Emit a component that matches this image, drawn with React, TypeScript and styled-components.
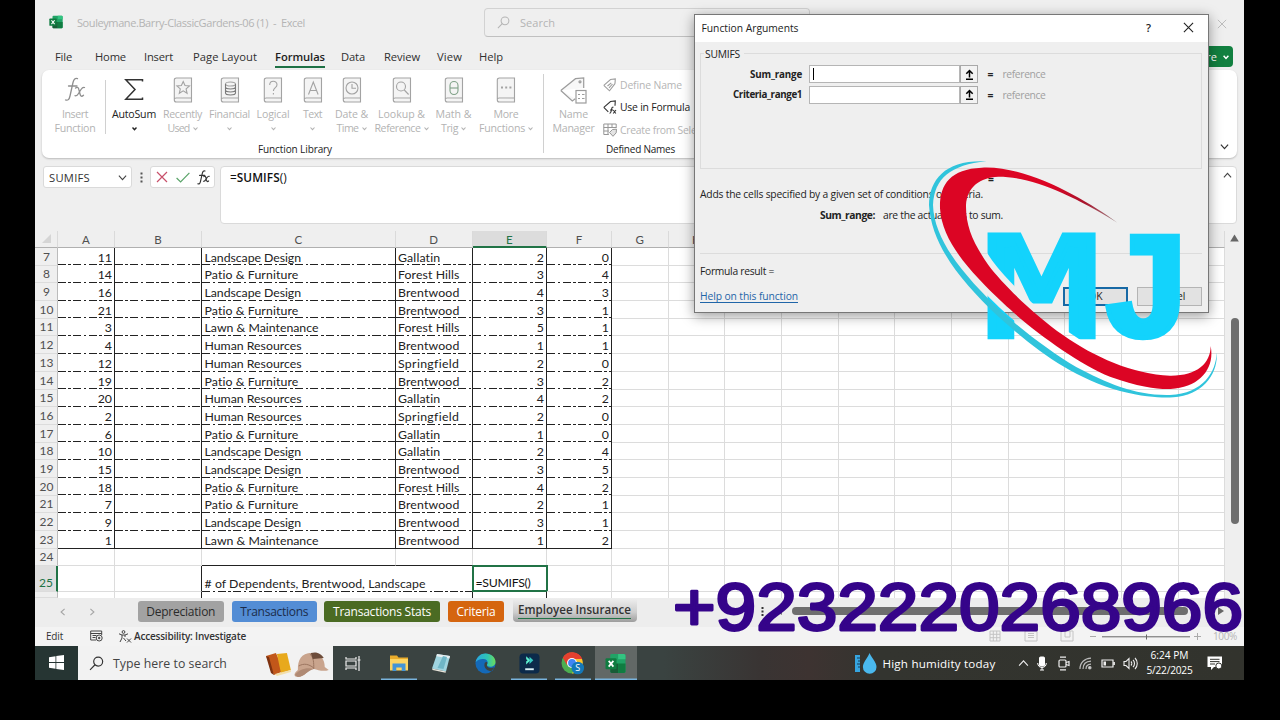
import React, { useLayoutEffect, useRef } from 'react';
import styled, { createGlobalStyle, css } from 'styled-components';

const ui = '"Open Sans", "Noto Sans", sans-serif';
const sheetFont = 'Lato, "Open Sans", sans-serif';

const Global = createGlobalStyle`
  * { box-sizing: border-box; }
  body { margin: 0; background: #000; overflow: hidden; }
`;

/* Text whose tracking is adjusted so that it spans a given width. */
const Run = styled.span`
  display: inline-block;
  white-space: pre;
`;

function Fit({ w, children }: { w: number; children: string }) {
  const ref = useRef<HTMLSpanElement>(null);
  useLayoutEffect(() => {
    const el = ref.current;
    if (!el) return;
    el.style.letterSpacing = '0px';
    const natural = el.getBoundingClientRect().width;
    el.style.letterSpacing = `${(w - natural) / children.length}px`;
  }, [w, children]);
  return <Run ref={ref}>{children}</Run>;
}

const Screen = styled.div`
  width: 1280px;
  height: 720px;
  background: #000;
  padding-left: 35px;
  position: relative;
  overflow: hidden;
  font-family: ${ui};
`;

const Win = styled.div`
  width: 1209px;
  height: 680px;
  background: #efefef;
  display: flex;
  flex-direction: column;
  overflow: hidden;
`;

/* ---------- title bar ---------- */
const TitleBar = styled.div`
  height: 43px;
  flex: none;
  display: flex;
  align-items: center;
  padding-left: 14px;
  color: #b4b4b4;
  font-size: 11px;
`;
const AppTitle = styled.div`
  width: 407px;
  margin-left: 14px;
  padding-top: 2px;
`;
const SearchBox = styled.div`
  width: 326px;
  height: 29px;
  margin-top: 2px;
  border: 1px solid #d2d2d2;
  border-bottom-color: #c0c0c0;
  border-radius: 4px;
  display: flex;
  align-items: center;
  gap: 10px;
  padding-left: 12px;
`;
const CloseWin = styled.div`
  margin: 4px 0 0 407px;
  height: 10px;
  display: flex;
`;

/* ---------- ribbon ---------- */
const Tabs = styled.div`
  height: 27px;
  flex: none;
  display: flex;
  padding: 5px 0 0 20px;
  font-size: 11.2px;
  line-height: 18px;
  color: #303030;
`;
const Tab = styled.div<{ $slot: number; $on?: boolean }>`
  width: ${(p) => p.$slot}px;
  ${(p) => p.$on && css`
    color: #1d1d1d;
    font-weight: 600;
    span { border-bottom: 2px solid #1e7145; height: 19.5px; }
  `}
`;
const Share = styled.div`
  margin-left: 644px;
  width: 60px;
  height: 21px;
  margin-top: -2px;
  border-radius: 4px;
  background: #128040;
  color: #fff;
  font-size: 11px;
  line-height: 20px;
  display: flex;
  align-items: center;
  justify-content: flex-end;
  gap: 6px;
  padding-right: 4px;
`;
const Ribbon = styled.div`
  height: 88px;
  flex: none;
  margin: 0 7px;
  background: #fff;
  border-radius: 7px;
  box-shadow: 0 1px 2px rgba(0, 0, 0, 0.22);
  display: flex;
  padding-left: 3px;
`;
const Group = styled.div<{ $w: number }>`
  width: ${(p) => p.$w}px;
  height: 88px;
  display: flex;
  flex-direction: column;
`;
const GroupBody = styled.div`
  display: flex;
  height: 71px;
`;
const GroupName = styled.div`
  text-align: center;
  padding-left: 2px;
  font-size: 10px;
  line-height: 17px;
  color: #222;
`;
const Tool = styled.div<{ $w: number; $on?: boolean }>`
  width: ${(p) => p.$w}px;
  flex: none;
  display: flex;
  flex-direction: column;
  align-items: center;
  padding-top: 7px;
  font-size: 10.6px;
  line-height: 14px;
  white-space: nowrap;
  color: ${(p) => (p.$on ? '#222' : '#b3b3b3')};
  svg { flex: none; }
`;
const ToolLine = styled.div`
  height: 14px;
  display: flex;
  align-items: center;
  justify-content: center;
  gap: 3px;
`;
const IconSlot = styled.div`
  height: 30px;
  display: flex;
  align-items: flex-start;
`;
const Divider = styled.div<{ $h: number; $top: number }>`
  width: 1px;
  flex: none;
  height: ${(p) => p.$h}px;
  margin-top: ${(p) => p.$top}px;
  background: #d0d0d0;
`;
const NameList = styled.div`
  display: flex;
  flex-direction: column;
  padding: 4px 0 0 0;
  font-size: 10.4px;
`;
const NameItem = styled.div<{ $on?: boolean }>`
  height: 23px;
  display: flex;
  align-items: center;
  gap: 3px;
  white-space: nowrap;
  color: ${(p) => (p.$on ? '#222' : '#b5b5b5')};
`;
const RibbonMore = styled.div`
  margin: 72px 0 0 485px;
  height: 8px;
  display: flex;
`;

/* ---------- formula bar ---------- */
const FormulaBar = styled.div`
  height: 73px;
  flex: none;
  display: flex;
  align-items: flex-start;
  padding: 8px 0 0 8px;
  font-size: 11.2px;
  color: #333;
`;
const Field = styled.div<{ $w: number; $ml?: number }>`
  width: ${(p) => p.$w}px;
  height: 22px;
  margin-left: ${(p) => p.$ml ?? 0}px;
  background: #fff;
  border: 1px solid #dadada;
  border-radius: 3px;
  display: flex;
  align-items: center;
  justify-content: space-between;
  padding: 0 4px 0 5px;
`;
const Dots = styled.div`
  width: 19px;
  height: 22px;
  display: flex;
  align-items: center;
  justify-content: center;
`;
const FormulaInput = styled.div`
  width: 1017px;
  height: 58px;
  margin-left: 5px;
  background: #fff;
  border: 1px solid #dadada;
  border-radius: 4px;
  display: flex;
  justify-content: space-between;
  padding: 2px 4px 0 9px;
  font-size: 11.8px;
  line-height: 17px;
  color: #111;
  b { font-weight: 600; }
  svg { margin-top: 2px; }
`;

/* ---------- sheet ---------- */
const SheetArea = styled.div`
  height: 366.5px;
  flex: none;
  display: flex;
  overflow: hidden;
`;
const tracks = '23px 57px 87px 193.5px 77px 74.5px 65px 56.5px repeat(9, 56.7px) 46px';
const Sheet = styled.div`
  width: 1190px;
  overflow: hidden;
  display: grid;
  grid-template-columns: ${tracks};
  grid-template-rows: 17px repeat(18, 17.7px) 26px 6px;
  font-family: ${sheetFont};
  font-size: 12.3px;
  color: #222;
  background: #fff;
`;
const ColHead = styled.div<{ $on?: boolean }>`
  background: ${(p) => (p.$on ? '#dcdcdc' : '#efefef')};
  border-right: 1px solid #dadada;
  border-bottom: ${(p) => (p.$on ? '2px solid #217346' : '1px solid #b0b0b0')};
  color: ${(p) => (p.$on ? '#217346' : '#505050')};
  text-align: center;
  line-height: 18px;
  font-size: 11.5px;
`;
const RowHead = styled.div<{ $on?: boolean }>`
  background: ${(p) => (p.$on ? '#dfdfdf' : '#efefef')};
  border-right: ${(p) => (p.$on ? '2px solid #217346' : '1px solid #bbb')};
  border-bottom: 1px solid #dcdcdc;
  color: ${(p) => (p.$on ? '#217346' : '#505050')};
  display: flex;
  align-items: flex-end;
  justify-content: center;
  line-height: 16px;
  font-size: 12px;
  padding-left: 1px;
`;
type Line = 'grid' | 'dash' | 'solid' | 'none';
const Cell = styled.div<{ $right?: boolean; $side: Line; $under: Line; $span?: number }>`
  ${(p) => p.$span && `grid-column: span ${p.$span};`}
  display: flex;
  align-items: flex-end;
  justify-content: ${(p) => (p.$right ? 'flex-end' : 'flex-start')};
  padding: 0 2px 0 2.5px;
  line-height: ${(p) => (p.$under === 'dash' ? 17 : 15)}px;
  white-space: nowrap;
  border-right: 1px solid ${(p) => (p.$side === 'solid' ? '#222' : p.$side === 'none' ? 'transparent' : '#dcdcdc')};
  ${(p) => p.$under === 'grid' && 'border-bottom: 1px solid #dcdcdc;'}
  ${(p) => p.$under === 'solid' && 'border-bottom: 1px solid #222;'}
  ${(p) => p.$under === 'dash' && css`
    background: repeating-linear-gradient(90deg, #222 0 8px, transparent 8px 10.5px, #222 10.5px 13px, transparent 13px 15.5px)
      0 100% / 100% 1.3px no-repeat;
  `}
`;
const EditCell = styled(Cell)`
  border: 2px solid #217346;
  margin: -1px -1px 0 -1px;
  padding-left: 2px;
  color: #111;
  line-height: 14px;
`;
const ScrollV = styled.div`
  width: 19px;
  display: flex;
  flex-direction: column;
  align-items: center;
  padding-top: 3px;
  gap: 76px;
`;
const ThumbV = styled.div`
  width: 8px;
  height: 206px;
  border-radius: 4px;
  background: #6e6e6e;
`;

/* ---------- sheet tabs ---------- */
const TabStrip = styled.div`
  height: 29px;
  flex: none;
  display: flex;
  align-items: flex-start;
  background: #ededed;
  padding-top: 3.5px;
`;
const Arrows = styled.div`
  width: 103px;
  height: 21px;
  padding-left: 24px;
  display: flex;
  align-items: center;
  gap: 21px;
`;
const SheetTab = styled.div<{ $w: number; $bg: string; $fg: string; $gap: number }>`
  width: ${(p) => p.$w}px;
  height: 21px;
  margin-right: ${(p) => p.$gap}px;
  border-radius: 3px;
  background: ${(p) => p.$bg};
  color: ${(p) => p.$fg};
  display: flex;
  align-items: center;
  justify-content: center;
  font-size: 12px;
`;
const CurrentTab = styled.div`
  width: 124px;
  height: 24px;
  margin-top: -3.5px;
  border-radius: 0 0 4px 4px;
  background: linear-gradient(#efefef, #cdcdcd 60%, #9d9d9d);
  display: flex;
  justify-content: center;
  color: #333;
  font-size: 11.6px;
  font-weight: 600;
  line-height: 23px;
  span { height: 21.5px; border-bottom: 1.5px solid #217346; }
`;
const ScrollH = styled.div`
  display: flex;
  align-items: center;
  height: 20px;
  margin-left: 124px;
  gap: 10px;
`;
const ThumbH = styled.div`
  width: 396px;
  height: 8px;
  border-radius: 4px;
  background: #6e6e6e;
`;

/* ---------- status bar ---------- */
const Status = styled.div`
  height: 19px;
  flex: none;
  background: #f3f3f3;
  display: flex;
  align-items: center;
  padding-left: 11px;
  font-size: 10px;
  color: #333;
`;
const StatusText = styled.div<{ $w: number; $bold?: boolean }>`
  width: ${(p) => p.$w}px;
  font-weight: ${(p) => (p.$bold ? 600 : 400)};
`;
const ViewTools = styled.div`
  margin-left: auto;
  padding-right: 7px;
  display: flex;
  align-items: center;
  gap: 4px;
  color: #b5b5b5;
`;

/* ---------- taskbar ---------- */
const Taskbar = styled.div`
  flex: 1;
  display: flex;
  background: linear-gradient(90deg, #3a4341 0, #3a4341 52%, #393433 60%, #3d3331 64%, #33342f 70%, #32332d 100%);
`;
const Start = styled.div`
  width: 43px;
  background: #263533;
  display: flex;
  align-items: center;
  justify-content: center;
`;
const TaskSearch = styled.div`
  width: 255px;
  background: #f2f2f2;
  display: flex;
  align-items: center;
  padding: 2px 4px 0 11px;
  color: #444;
  font-size: 12.3px;
`;
const SearchLabel = styled.div`
  width: 153px;
  margin-left: 9px;
`;
const TaskItem = styled.div<{ $w: number; $line?: boolean; $on?: boolean }>`
  width: ${(p) => p.$w}px;
  padding-top: 1px;
  display: flex;
  align-items: center;
  justify-content: center;
  ${(p) => p.$line && 'box-shadow: inset 0 -1.5px #79b4dd;'}
  ${(p) => p.$on && 'background: #626866;'}
`;
const Weather = styled.div`
  display: flex;
  align-items: center;
  gap: 6px;
  margin-left: 217px;
  padding-top: 1px;
  color: #fff;
  font-size: 11.6px;
`;
const Tray = styled.div`
  display: flex;
  align-items: center;
  gap: 8.8px;
  margin-left: 22px;
  padding-top: 1px;
`;
const Clock = styled.div`
  width: 50px;
  margin-left: 6px;
  padding-top: 1px;
  color: #fff;
  font-size: 10.2px;
  line-height: 15.5px;
  text-align: center;
  align-self: center;
`;
const Notice = styled.div`
  margin-left: 13px;
  padding-top: 1px;
  display: flex;
  align-items: center;
`;

/* ---------- dialog ---------- */
const Dialog = styled.div`
  position: absolute;
  left: 694px;
  top: 14px;
  width: 515px;
  height: 299px;
  border: 1px solid #777;
  background: #efefef;
  box-shadow: 0 3px 12px rgba(0, 0, 0, 0.4);
  font-size: 10.3px;
  color: #222;
`;
const DialogTitle = styled.div`
  height: 27px;
  background: #fff;
  display: flex;
  align-items: center;
  padding: 0 14px 2px 6.5px;
`;
const TitleButtons = styled.div`
  margin-left: auto;
  display: flex;
  align-items: center;
  gap: 32px;
  font-size: 11px;
  font-weight: 600;
`;
const Arguments = styled.div`
  width: 502px;
  height: 116px;
  margin: 11px 0 0 5px;
  border: 1px solid #dcdcdc;
`;
const Legend = styled.div`
  width: 40px;
  height: 12px;
  margin: -7px 0 0 3px;
  padding-left: 1px;
  background: #efefef;
  line-height: 14px;
`;
const ArgRow = styled.div`
  height: 18px;
  margin-bottom: 2.6px;
  display: flex;
  align-items: center;
  &:nth-child(2) { margin-top: 6px; }
`;
const ArgName = styled.div`
  width: 101px;
  margin-right: 7px;
  text-align: right;
  font-weight: 700;
  font-size: 9.8px;
`;
const ArgInput = styled.div`
  width: 151px;
  height: 18px;
  border: 1px solid #b5b5b5;
  background: #fff;
  display: flex;
  align-items: center;
  padding-left: 3px;
`;
const Caret = styled.div`
  width: 1px;
  height: 12px;
  background: #000;
`;
const PickButton = styled.div`
  width: 18px;
  height: 18px;
  border: 1.5px solid #a9a9a9;
  background: #f3f3f3;
  display: flex;
  align-items: center;
  justify-content: center;
`;
const Equals = styled.div`
  width: 24.5px;
  padding-left: 9.5px;
  font-weight: 700;
`;
const Muted = styled.div`
  color: #a0a0a0;
`;
const Result = styled.div`
  height: 12px;
  line-height: 12px;
  margin: 4px 0 0 293px;
  font-weight: 700;
`;
const Para = styled.div`
  height: 14px;
  line-height: 14px;
  margin: 2px 0 0 5px;
`;
const ArgHelp = styled.div`
  display: flex;
  gap: 8px;
  height: 14px;
  line-height: 14px;
  margin: 7px 0 31px 125px;
  b { font-weight: 700; }
`;
const Foot = styled.div`
  height: 58px;
  margin: 0 6px 0 5px;
  border-top: 1px solid #dcdcdc;
  padding-top: 10px;
  line-height: 14px;
`;
const FootRow = styled.div`
  display: flex;
  align-items: center;
  height: 20px;
  margin-top: 8px;
`;
const HelpLink = styled.div`
  color: #1f65a8;
  width: 363px;
  span { border-bottom: 1px solid #1f65a8; line-height: 12px; }
`;
const Button = styled.div<{ $primary?: boolean; $ml?: number }>`
  width: 65px;
  height: 19px;
  margin-left: ${(p) => p.$ml ?? 0}px;
  border: ${(p) => (p.$primary ? '2px solid #1769a5' : '1px solid #b4b4b4')};
  background: #e2e2e2;
  text-align: center;
  line-height: ${(p) => (p.$primary ? 15 : 17)}px;
`;

/* ---------- overlays ---------- */
const Mark = styled.svg`
  position: absolute;
  left: 920px;
  top: 150px;
`;
const Phone = styled.svg`
  position: absolute;
  left: 660px;
  top: 568px;
`;

/* ---------- icons ---------- */
const Chevron = ({ size = 5, color = 'currentColor', turn = 0, sw = 1.1 }: { size?: number; color?: string; turn?: number; sw?: number }) => (
  <svg width={size} height={size} viewBox="0 0 10 10" fill="none" stroke={color} strokeWidth={(sw * 10) / size}>
    <path d="M1 3l4 4.4L9 3" transform={`rotate(${turn} 5 5)`} />
  </svg>
);

const Cross = ({ size, color, sw = 1.2 }: { size: number; color: string; sw?: number }) => (
  <svg width={size} height={size} viewBox="0 0 12 12" stroke={color} strokeWidth={sw}>
    <path d="M1 1l10 10M11 1L1 11" />
  </svg>
);

const Lens = ({ size, color, sw = 1.1 }: { size: number; color: string; sw?: number }) => (
  <svg width={size} height={size} viewBox="0 0 14 14" fill="none" stroke={color} strokeWidth={sw}>
    <circle cx="8.6" cy="5.2" r="4.2" />
    <path d="M5.6 8.2L1 13" />
  </svg>
);

const ExcelIcon = ({ size }: { size: number }) => (
  <svg width={size} height={size} viewBox="0 0 20 20">
    <rect x="5" y="1" width="14.5" height="18" rx="1.4" fill="#21a366" />
    <path d="M12.5 1H18a1.5 1.5 0 011.5 1.500V6h-7z" fill="#33c481" />
    <path d="M5 10h7.500v9H6.400A1.400 1.400 0 015 17.600z" fill="#185c37" />
    <path d="M12.500 10h7v7.600a1.400 1.400 0 01-1.400 1.400h-5.600z" fill="#107c41" />
    <rect x="0.500" y="5" width="10.500" height="10.500" rx="1" fill="#107c41" />
    <path d="M3.500 7.500l4.500 5.500M8 7.500l-4.500 5.500" stroke="#fff" strokeWidth="1.600" />
  </svg>
);

const FxIcon = ({ w, h, color, sw }: { w: number; h: number; color: string; sw: number }) => (
  <svg width={w} height={h} viewBox="0 0 21 25" fill="none" stroke={color} strokeWidth={sw} strokeLinecap="round">
    <path d="M1 23c2.500.800 3.700-.500 4.500-4L8.500 5.500C9.300 2 10.800.900 13 1.700M4 9h8.500" />
    <path d="M11 11c2-1.500 3-.5 3.500 2l1 4c.6 2.500 1.700 3 3.500 1.300M20 10.500c-1.500-.5-2.500.5-3.500 2l-2.500 4c-1 1.800-2 2.700-3.500 2.200" />
  </svg>
);

const SigmaIcon = () => (
  <svg width="20" height="25" viewBox="0 0 20 25" fill="none" stroke="#333" strokeWidth="1.500">
    <path d="M18.500 4.500V2.700H1.800l9.200 9.800L1.800 22.300h16.700V20.500" />
  </svg>
);

const Book = ({ children }: { children: React.ReactNode }) => (
  <svg width="20" height="26" viewBox="0 0 20 26" fill="none" stroke="#a3a3a3" strokeWidth="1.100">
    <path d="M18.500 1H3.500A2 2 0 001.300 3v20a2 2 0 002 2h15.200zM1.300 22.500c0-1 1-1.500 2-1.500h15.200" fill="#f4f4f4" />
    {children}
  </svg>
);

const glyphs: Record<string, React.ReactNode> = {
  star: <path d="M10.200 4.500l1.800 4 4.500.4-3.400 3 1 4.400-3.900-2.400-3.900 2.400 1-4.400-3.400-3 4.500-.4z" />,
  coins: <g><ellipse cx="10.500" cy="7" rx="5" ry="2" /><path d="M5.500 7v9c0 2.600 10 2.600 10 0V7M5.500 10c0 2.600 10 2.600 10 0M5.500 13c0 2.600 10 2.600 10 0" stroke="#7b7b7b" /></g>,
  ask: <g><path d="M6.700 8c0-5 7.300-4.800 7.300-.3 0 3-3.600 2.800-3.600 6.300" /><path d="M10.400 16v1.600" /></g>,
  letter: <path d="M5.500 17.500L10.300 5l4.800 12.500M7 13.500h6.600" />,
  clock: <g><circle cx="10" cy="11" r="6" /><path d="M10 7v4.300h4" /></g>,
  lens: <g><circle cx="9" cy="9.500" r="4.500" /><path d="M12.300 13l4.300 4.500" /></g>,
  theta: <g stroke="#7fa187"><rect x="6" y="4.500" width="8" height="13" rx="4" /><path d="M6 11h8" /></g>,
  dots: <path d="M5 10.500h2M9.200 10.500h2M13.400 10.500h2" strokeWidth="2" />,
};

const TagIcon = ({ color, fx }: { color: string; fx?: boolean }) => (
  <svg width="14" height="14" viewBox="0 0 14 14" fill="none" stroke={color} strokeWidth="1.100">
    <path d="M.8 7.300L7.500 1.500 12.300.9l-.3 4.800" />
    {fx ? <path d="M.8 7.300l4.500 4.500M6.500 13.300c1 0 1.300-.6 1.600-2l.7-3c.3-1 .8-1.300 1.700-1M7 10h3M10.300 10l2.500 3.500M13 10l-2.800 3.500" /> : <path d="M.8 7.300l5.700 5.500L12 5.700M4.500 8l3.800-3.200M6 9.800L9.500 6" />}
  </svg>
);

const ManagerIcon = () => (
  <svg width="27" height="27" viewBox="0 0 27 27" fill="none" stroke="#9c9c9c" strokeWidth="1.200">
    <path d="M.8 13.500L15.500 1.700 23.700.9V11M.8 13.500L12.300 24l3-2.300" fill="#f7f7f7" />
    <circle cx="20" cy="4.800" r="1" />
    <rect x="16" y="13.500" width="10" height="12.500" fill="#fff" />
    <path d="M18 17.500h2M22 17.500h2.500M18 21.500h2M22 21.500h2.500" />
  </svg>
);

const SelectionIcon = () => (
  <svg width="14" height="14" viewBox="0 0 14 14" fill="none" stroke="#969696" strokeWidth="1">
    <path d="M.8 1h12.400v4M.8 1v10.500h5M.8 4.500h12.400M.8 8h5M5 1v10.500M9 1v4" />
    <path d="M6.500 9.500l3-3 4-.3-.3 3.600-3.200 3.500z" fill="#e3e3e3" />
  </svg>
);

const UpArrow = () => (
  <svg width="9" height="11" viewBox="0 0 9 11" fill="none" stroke="#000" strokeWidth="1.500">
    <path d="M4.500 8.500V2M1.300 4.800L4.500 1.500l3.200 3.300M1 10.200h7" />
  </svg>
);

/* ---------- data ---------- */
const LD = 'Landscape Design';
const PF = 'Patio & Furniture';
const LM = 'Lawn & Maintenance';
const HR = 'Human Resources';
const FH = 'Forest Hills';
const BW = 'Brentwood';
const GA = 'Gallatin';
const SP = 'Springfield';
const textWidth: Record<string, number> = { [LD]: 96.5, [PF]: 94, [LM]: 114, [HR]: 97, [FH]: 61.500, [BW]: 61.500, [GA]: 42.500, [SP]: 61 };

const rows: [number, number, string, string, number, number][] = [
  [7, 11, LD, GA, 2, 0],
  [8, 14, PF, FH, 3, 4],
  [9, 16, LD, BW, 4, 3],
  [10, 21, PF, BW, 3, 1],
  [11, 3, LM, FH, 5, 1],
  [12, 4, HR, BW, 1, 1],
  [13, 12, HR, SP, 2, 0],
  [14, 19, PF, BW, 3, 2],
  [15, 20, HR, GA, 4, 2],
  [16, 2, HR, SP, 2, 0],
  [17, 6, PF, GA, 1, 0],
  [18, 10, LD, GA, 2, 4],
  [19, 15, LD, BW, 3, 5],
  [20, 18, PF, FH, 4, 2],
  [21, 7, PF, BW, 2, 1],
  [22, 9, LD, BW, 3, 1],
  [23, 1, LM, BW, 1, 2],
];

const tools: { icon: string; w: number; a: [string, number]; b?: [string, number] }[] = [
  { icon: 'star', w: 41, a: ['Recently', 39], b: ['Used', 22] },
  { icon: 'coins', w: 53, a: ['Financial', 41] },
  { icon: 'ask', w: 34, a: ['Logical', 33] },
  { icon: 'letter', w: 45, a: ['Text', 19] },
  { icon: 'clock', w: 33, a: ['Date &', 33], b: ['Time', 22] },
  { icon: 'lens', w: 67, a: ['Lookup &', 47], b: ['Reference', 46] },
  { icon: 'theta', w: 37, a: ['Math &', 36], b: ['Trig', 17] },
  { icon: 'dots', w: 68, a: ['More', 25], b: ['Functions', 46] },
];

const columns = ['A', 'B', 'C', 'D', 'E', 'F', 'G', 'H', '', '', '', '', '', '', '', '', ''];

const Blank = ({ n, under = 'grid' }: { n: number; under?: Line }) => (
  <>{Array.from({ length: n }, (_, i) => <Cell key={i} $side="grid" $under={under} />)}</>
);

function SheetGrid() {
  return (
    <Sheet>
      <ColHead>
        <svg width="11" height="11" viewBox="0 0 11 11"><path d="M10 1v9H1z" fill="#d5d5d5" /></svg>
      </ColHead>
      {columns.map((c, i) => <ColHead key={i} $on={c === 'E'}>{c}</ColHead>)}
      {rows.map(([r, a, c, d, e, f]) => {
        const under: Line = r === 23 ? 'solid' : 'dash';
        return (
          <React.Fragment key={r}>
            <RowHead>{r}</RowHead>
            <Cell $right $side="solid" $under={under}>{a}</Cell>
            <Cell $side="solid" $under={under} />
            <Cell $side="solid" $under={under}><Fit w={textWidth[c]}>{c}</Fit></Cell>
            <Cell $side="solid" $under={under}><Fit w={textWidth[d]}>{d}</Fit></Cell>
            <Cell $right $side="solid" $under={under}>{e}</Cell>
            <Cell $right $side="solid" $under={under}>{f}</Cell>
            <Blank n={11} />
          </React.Fragment>
        );
      })}
      <RowHead>24</RowHead>
      <Blank n={2} />
      <Cell $side="grid" $under="solid" />
      <Cell $side="grid" $under="solid" />
      <Blank n={13} />
      <RowHead $on>25</RowHead>
      <Cell $side="grid" $under="grid" />
      <Cell $side="solid" $under="grid" />
      <Cell $span={2} $side="none" $under="dash"><Fit w={221}># of Dependents, Brentwood, Landscape</Fit></Cell>
      <EditCell $side="grid" $under="none"><Fit w={55}>=SUMIFS()</Fit></EditCell>
      <Blank n={12} />
      <RowHead />
      <Cell $side="grid" $under="none" />
      <Cell $side="solid" $under="none" />
      <Cell $span={2} $side="solid" $under="none" />
      <Cell $side="solid" $under="none" />
      <Blank n={12} under="none" />
    </Sheet>
  );
}

const RED = 'M592 218C500 150 320 45 185 53C90 57 58 105 60 175C66 275 150 365 250 460C330 535 470 640 570 680C660 712 720 719 752 717C840 712 885 655 872 588C872 640 830 678 750 677C640 674 520 620 430 556C340 492 250 405 205 345C160 280 137 230 138 165C142 110 180 82 235 80C330 80 450 130 592 218Z';
const CYAN = 'M200 34C80 28 28 85 27 165C34 290 130 400 230 495C340 595 450 680 600 723C680 743 730 744 760 742C850 736 895 670 890 608C888 665 850 730 750 735C650 738 560 700 470 652C400 610 320 552 245 485C140 385 42 275 39 165C44 85 90 45 200 34Z';

function LogoMark() {
  return (
    <Mark width="330" height="260" viewBox="0 0 990 780">
      <defs>
        <mask id="gap" maskUnits="userSpaceOnUse" x="0" y="0" width="990" height="780">
          <rect width="990" height="780" fill="#fff" />
          <path d={RED} fill="#000" stroke="#000" strokeWidth="34" />
        </mask>
        <radialGradient id="tail" gradientUnits="userSpaceOnUse" cx="592" cy="218" r="230">
          <stop offset="0" stopColor="#a09090" />
          <stop offset=".5" stopColor="#a8142c" />
          <stop offset="1" stopColor="#dc0524" />
        </radialGradient>
      </defs>
      <g mask="url(#gap)" fill="#13d3fc" stroke="#13d3fc">
        <text transform="translate(193 557) scale(1.4 1)" fontFamily='"DejaVu Sans Mono", monospace' fontSize="409" strokeWidth="20">M</text>
        <text transform="translate(540 561) scale(1.02 1)" fontFamily='"Liberation Mono", monospace' fontWeight="700" fontSize="458" strokeWidth="14">J</text>
      </g>
      <path d={CYAN} fill="#30c4dc" />
      <path d={RED} fill="url(#tail)" />
    </Mark>
  );
}

export default function App() {
  return (
    <Screen>
      <Global />
      <Win>
        <TitleBar>
          <ExcelIcon size={14} />
          <AppTitle><Fit w={228}>Souleymane.Barry-ClassicGardens-06 (1)  -  Excel</Fit></AppTitle>
          <SearchBox><Lens size={13} color="#b5b5b5" /><Fit w={35}>Search</Fit></SearchBox>
          <CloseWin><Cross size={10} color="#bdbdbd" /></CloseWin>
        </TitleBar>

        <Tabs>
          <Tab $slot={40}><Fit w={17}>File</Fit></Tab>
          <Tab $slot={49}><Fit w={31}>Home</Fit></Tab>
          <Tab $slot={49}><Fit w={29}>Insert</Fit></Tab>
          <Tab $slot={82}><Fit w={64}>Page Layout</Fit></Tab>
          <Tab $slot={66} $on><Fit w={50}>Formulas</Fit></Tab>
          <Tab $slot={43}><Fit w={24}>Data</Fit></Tab>
          <Tab $slot={53}><Fit w={36}>Review</Fit></Tab>
          <Tab $slot={42}><Fit w={25}>View</Fit></Tab>
          <Tab $slot={50}><Fit w={24}>Help</Fit></Tab>
          <Share>Share<Chevron size={6} sw={1.500} /></Share>
        </Tabs>

        <Ribbon>
          <Group $w={498}>
            <GroupBody>
              <Tool $w={60}>
                <IconSlot><FxIcon w={22} h={25} color="#8f8f8f" sw={1.300} /></IconSlot>
                <ToolLine><Fit w={26}>Insert</Fit></ToolLine>
                <ToolLine><Fit w={41}>Function</Fit></ToolLine>
              </Tool>
              <Divider $h={54} $top={10} />
              <Tool $w={56} $on>
                <IconSlot><SigmaIcon /></IconSlot>
                <ToolLine><Fit w={44}>AutoSum</Fit></ToolLine>
                <ToolLine><Chevron sw={1.400} /></ToolLine>
              </Tool>
              {tools.map((t) => (
                <Tool key={t.icon} $w={t.w}>
                  <IconSlot><Book>{glyphs[t.icon]}</Book></IconSlot>
                  <ToolLine><Fit w={t.a[1]}>{t.a[0]}</Fit></ToolLine>
                  <ToolLine>{t.b && <Fit w={t.b[1]}>{t.b[0]}</Fit>}<Chevron /></ToolLine>
                </Tool>
              ))}
            </GroupBody>
            <GroupName><Fit w={74}>Function Library</Fit></GroupName>
          </Group>
          <Divider $h={79} $top={4} />
          <Group $w={191}>
            <GroupBody>
              <Tool $w={59}>
                <IconSlot><ManagerIcon /></IconSlot>
                <ToolLine><Fit w={29}>Name</Fit></ToolLine>
                <ToolLine><Fit w={42}>Manager</Fit></ToolLine>
              </Tool>
              <NameList>
                <NameItem><TagIcon color="#9d9d9d" /><Fit w={62}>Define Name</Fit></NameItem>
                <NameItem $on><TagIcon color="#333" fx /><Fit w={70}>Use in Formula</Fit></NameItem>
                <NameItem><SelectionIcon /><Fit w={99}>Create from Selection</Fit></NameItem>
              </NameList>
            </GroupBody>
            <GroupName><Fit w={69}>Defined Names</Fit></GroupName>
          </Group>
          <RibbonMore><Chevron size={9} color="#333" sw={1.200} /></RibbonMore>
        </Ribbon>

        <FormulaBar>
          <Field $w={89}><Fit w={41}>SUMIFS</Fit><Chevron size={9} color="#444" /></Field>
          <Dots>
            <svg width="3" height="11" viewBox="0 0 3 11" fill="#555"><rect x=".5" y=".5" width="2" height="2" /><rect x=".5" y="4.500" width="2" height="2" /><rect x=".5" y="8.500" width="2" height="2" /></svg>
          </Dots>
          <Field $w={65} $ml={-1}>
            <Cross size={12} color="#c8506a" />
            <svg width="14" height="11" viewBox="0 0 14 11" fill="none" stroke="#5aa469" strokeWidth="1.200"><path d="M.6 6l4 4L13.400.8" /></svg>
            <FxIcon w={13} h={15} color="#333" sw={1.900} />
          </Field>
          <FormulaInput>
            <div>=<b><Fit w={43}>SUMIFS</Fit></b>()</div>
            <Chevron size={9} color="#444" turn={180} />
          </FormulaInput>
        </FormulaBar>

        <SheetArea>
          <SheetGrid />
          <ScrollV>
            <svg width="9" height="8" viewBox="0 0 9 8"><path d="M4.500.5L8.800 7.500H.2z" fill="#666" /></svg>
            <ThumbV />
          </ScrollV>
        </SheetArea>

        <TabStrip>
          <Arrows><Chevron size={8} color="#a5a5a5" turn={90} /><Chevron size={8} color="#a5a5a5" turn={-90} /></Arrows>
          <SheetTab $w={85.500} $gap={8.500} $bg="#a2a2a2" $fg="#2b2b2b"><Fit w={69}>Depreciation</Fit></SheetTab>
          <SheetTab $w={84.500} $gap={7.500} $bg="#538dd5" $fg="#1b2c4a"><Fit w={68}>Transactions</Fit></SheetTab>
          <SheetTab $w={116} $gap={8} $bg="#4b6b23" $fg="#fff"><Fit w={98}>Transactions Stats</Fit></SheetTab>
          <SheetTab $w={56} $gap={8.500} $bg="#d5650f" $fg="#fff"><Fit w={39}>Criteria</Fit></SheetTab>
          <CurrentTab><Fit w={113}>Employee Insurance</Fit></CurrentTab>
          <ScrollH>
            <svg width="3" height="9" viewBox="0 0 3 9" fill="#333"><path d="M.5 0h2v2h-2zM.5 3.500h2v2h-2zM.5 7h2v2h-2z" /></svg>
            <svg width="8" height="8" viewBox="0 0 8 8"><path d="M8 0v8L1 4z" fill="#777" /></svg>
            <ThumbH />
            <svg width="40" height="8" viewBox="0 0 40 8"><path d="M20 0v8l6-4z" fill="#666" /></svg>
          </ScrollH>
        </TabStrip>

        <Status>
          <StatusText $w={44}><Fit w={17}>Edit</Fit></StatusText>
          <svg width="13" height="12" viewBox="0 0 13 12" fill="none" stroke="#444" strokeWidth="1"><path d="M6 10H.7V1h11v4M.7 3.500h11M2.500 5.500h4M2.500 7.500h3" /><circle cx="9.200" cy="8" r="3" /><circle cx="9.200" cy="8" r=".8" fill="#444" /></svg>
          <svg width="31" height="13" viewBox="1 0 31 13" fill="none" stroke="#444" strokeWidth="1"><circle cx="21.500" cy="2" r="1.400" /><path d="M17 3.800l3 1.200v3L18 12M26 3.800l-3 1.200v2M20 5h3M25 8.500l4 4M29 8.500l-4 4M21.500 8l2.500 3" /></svg>
          <StatusText $w={120} $bold><Fit w={112}>Accessibility: Investigate</Fit></StatusText>
          <ViewTools>
            <svg width="220" height="12" viewBox="0 0 220 12" fill="none" stroke="#c4c4c4" strokeWidth="1">
              <path d="M1 1h10v10H1zM1 4.300h10M1 7.700h10M4.300 1v10M7.700 1v10M36 1h12v10H36zM39 3.500h6M39 5.500h6M39 7.500h6M72 1h12v10H72zM76 1v6h5V1" />
              <path d="M101 6.500h6M205 6.500h7M208.500 3v7" stroke="#aaa" />
              <path d="M113 6.800h88M157.500 4.500v5" stroke="#666" />
            </svg>
            <Fit w={24}>100%</Fit>
          </ViewTools>
        </Status>

        <Taskbar>
          <Start>
            <svg width="15" height="15" viewBox="0 0 15 15" fill="#fff"><path d="M0 2.200L6.500 1.200v5.900H0zM7.300 1L15 0v7.100H7.300zM0 7.900h6.500v5.900L0 12.800zM7.300 7.900H15V15l-7.700-1z" /></svg>
          </Start>
          <TaskSearch>
            <Lens size={15} color="#333" />
            <SearchLabel><Fit w={114}>Type here to search</Fit></SearchLabel>
            <svg width="64" height="28" viewBox="0 0 64 28">
              <path d="M1 6l10-3 8 18-10 4z" fill="#c2571a" /><path d="M1 6l3 1 5 18-3-2z" fill="#7e3210" />
              <path d="M12 4l10-1 4 17-10 3z" fill="#e8a91c" /><path d="M10 24l16-4v2l-14 4z" fill="#f3dfaa" />
              <path d="M33 20c0-10 3-17 14-17 9 0 13 7 13 14l4 3c-5 2-11 0-15-1-6 0-9 8-16 8-4 0-5-3 0-7z" fill="#c9a48d" />
              <path d="M45 4c4 3 4 9 4 15M34 16c5-3 10-2 15 2" fill="none" stroke="#9b7560" />
              <path d="M46 3c6-2 11 1 13 5l-11 1z" fill="#6d4c3a" />
              <path d="M30 25c4-5 11-8 19-6-6 1-9 8-16 8z" fill="#b08a74" />
            </svg>
          </TaskSearch>
          <TaskItem $w={40}>
            <svg width="16" height="15" viewBox="0 0 16 15" fill="none" stroke="#eee" strokeWidth="1.200"><path d="M1 1v2h10V1M1 14v-2h10v2M1 5h10v5H1zM14 0v15M12.500 4h3" /></svg>
          </TaskItem>
          <TaskItem $w={8} />
          <TaskItem $w={36} $line>
            <svg width="20" height="18" viewBox="0 0 20 18"><path d="M1 1.500h7l1.500 2H19V16H1z" fill="#e9ac2b" /><path d="M1 5h18v11.500H1z" fill="#fcd462" /><path d="M3.500 9.500h13v7.500h-3.800v-3.500H7.300V17H3.500z" fill="#4394d6" /></svg>
          </TaskItem>
          <TaskItem $w={48}>
            <svg width="20" height="20" viewBox="0 0 20 20"><path d="M6 1l13 2-4 15.500L1 15.500z" fill="#9fd4df" /><path d="M6 1l13 2-.6 2.500L5.400 3.300z" fill="#e7eef0" /><path d="M1 15.500l14 3-.5 1.300-13-2.800z" fill="#e8e4da" /><path d="M12 3l4 1-3.500 12-6-1z" fill="#6fb6c6" /></svg>
          </TaskItem>
          <TaskItem $w={41}>
            <svg width="21" height="21" viewBox="0 0 22 22">
              <defs>
                <linearGradient id="edgeTop" x1="0" y1="0" x2="1" y2="0"><stop offset="0" stopColor="#2aa8e0" /><stop offset=".6" stopColor="#2fc5b4" /><stop offset="1" stopColor="#6bdc5a" /></linearGradient>
              </defs>
              <circle cx="11" cy="11" r="10.500" fill="#1469b8" />
              <path d="M.6 10C1.500 4 6 .5 11 .5c6 0 10.500 4 10.500 9 0 3-2.500 5-5.500 5-2 0-3.500-1-3.500-1.800 0-.7.8-1 .8-2.700 0-2-1.800-3.700-4.300-3.700C5 6.300 1.500 8 .6 10z" fill="url(#edgeTop)" />
              <path d="M12.500 12.500c-.6 2 2.500 4.500 8 2.500-1 1.500-2 3-3.500 4-4 0-8-3-7-8 .5-1 1.500-1.500 2.500-1.500 1 1-.2 2-0 3z" fill="#3a4341" />
            </svg>
          </TaskItem>
          <TaskItem $w={5} />
          <TaskItem $w={36} $line>
            <svg width="21" height="21" viewBox="0 0 22 22"><rect x=".5" y=".5" width="21" height="21" rx="4" fill="#0c2a4a" /><path d="M7.500 3.500L12 7.500 7.500 12v-3L9 7.500 7.500 6.500z" fill="#5ff0d0" /><path d="M11 4l4 3.700-4 3.800" fill="#35c9c0" /><path d="M6.500 17h9" stroke="#d8eef5" strokeWidth="2" /></svg>
          </TaskItem>
          <TaskItem $w={8} />
          <TaskItem $w={36} $line>
            <svg width="24" height="23" viewBox="0 0 24 23">
              <circle cx="11" cy="11" r="10.500" fill="#4caf50" />
              <path d="M11 11L1.900 5.800A10.500 10.500 0 0121.200 7.500L11 7z" fill="#e5402f" />
              <path d="M11 .5a10.500 10.500 0 00-9.200 5.300L6 13l5-6h10A10.500 10.500 0 0011 .5z" fill="#e5402f" />
              <path d="M21 7h-8l2.500 6L11 21.500A10.500 10.500 0 0021 7z" fill="#fbc22d" />
              <circle cx="11" cy="11" r="5" fill="#fff" /><circle cx="11" cy="11" r="3.900" fill="#4285f4" />
              <circle cx="16.800" cy="16" r="6.300" fill="#1478b8" />
              <text x="16.800" y="19.300" textAnchor="middle" fontSize="9" fill="#fff" fontFamily="Open Sans, sans-serif">S</text>
            </svg>
          </TaskItem>
          <TaskItem $w={3.500} />
          <TaskItem $w={42} $line $on><ExcelIcon size={21} /></TaskItem>
          <Weather>
            <svg width="23" height="23" viewBox="0 0 23 23">
              <path d="M1 3h5v17H1z" fill="#36a5e0" /><path d="M3 6h3M4 9h2M3 12h3M4 15h2" stroke="#173a55" strokeWidth="1.200" />
              <path d="M15.500 1c2 5 7 9 7 14a6.800 6.800 0 01-13.600 0c0-5 5-9 6.600-14z" fill="#4ab8ee" />
            </svg>
            <Fit w={113}>High humidity today</Fit>
          </Weather>
          <Tray>
            <Chevron size={11} color="#eee" turn={180} />
            <svg width="10" height="15" viewBox="0 0 10 15" fill="none" stroke="#fff"><rect x="2.500" y="1" width="5" height="9" rx="1" fill="#fff" /><path d="M.7 7c0 6 8.600 6 8.600 0M5 11.500V14M3 14h4" /></svg>
            <svg width="14" height="15" viewBox="-2 0 14 15" fill="none" stroke="#eee" strokeWidth="1.200"><rect x="1" y="4" width="7" height="7" rx="1" /><path d="M8 6.500l3-1v4l-3-1M2 1.200h6M2 13.800h6" /></svg>
            <svg width="13" height="13" viewBox="0 0 13 13" fill="none" stroke="#bbb" strokeWidth="1.200"><path d="M1 12C1 5.500 5.500 1.500 12 1.200M4 12c0-4.500 3-7.500 8-7.800M7 12c0-2.800 2-4.700 5-4.800" /><circle cx="10.800" cy="10.800" r="1.200" fill="#eee" /></svg>
            <svg width="14" height="9" viewBox="0 0 14 9" fill="none" stroke="#eee" strokeWidth="1.200"><path d="M1 1h11v7H1zM13.300 3v3" /><path d="M2.500 2.500h2.500v4H2.500z" fill="#eee" stroke="none" /></svg>
            <svg width="15" height="13" viewBox="0 0 15 13" fill="none" stroke="#eee" strokeWidth="1.100"><path d="M1 4.500h2L6 1.500v10L3 8.500H1zM8 4.500c1 1 1 3 0 4M10 2.800c2 2 2 5.400 0 7.400M12 1c3 3 3 8 0 11" /></svg>
          </Tray>
          <Clock><Fit w={38}>6:24 PM</Fit><Fit w={46}>5/22/2025</Fit></Clock>
          <Notice>
            <svg width="16" height="15" viewBox="0 0 16 15"><path d="M.5.500h14.500v10.500H7L4 14v-3H.5z" fill="#fff" /><path d="M3 3.300h9.500M3 5.600h9.500M3 8h5" stroke="#33342f" /><circle cx="11.800" cy="10" r="3" fill="#fff" stroke="#33342f" /></svg>
          </Notice>
        </Taskbar>
      </Win>

      <Dialog>
        <DialogTitle>
          <Fit w={97}>Function Arguments</Fit>
          <TitleButtons>?<Cross size={11} color="#222" /></TitleButtons>
        </DialogTitle>
        <Arguments>
          <Legend><Fit w={35}>SUMIFS</Fit></Legend>
          <ArgRow>
            <ArgName><Fit w={52}>Sum_range</Fit></ArgName>
            <ArgInput><Caret /></ArgInput>
            <PickButton><UpArrow /></PickButton>
            <Equals>=</Equals>
            <Muted><Fit w={43}>reference</Fit></Muted>
          </ArgRow>
          <ArgRow>
            <ArgName><Fit w={69}>Criteria_range1</Fit></ArgName>
            <ArgInput />
            <PickButton><UpArrow /></PickButton>
            <Equals>=</Equals>
            <Muted><Fit w={43}>reference</Fit></Muted>
          </ArgRow>
        </Arguments>
        <Result>=</Result>
        <Para><Fit w={283}>Adds the cells specified by a given set of conditions or criteria.</Fit></Para>
        <ArgHelp><b><Fit w={55}>Sum_range:</Fit></b><Fit w={120}>are the actual cells to sum.</Fit></ArgHelp>
        <Foot>
          <Fit w={74}>Formula result =</Fit>
          <FootRow>
            <HelpLink><Fit w={98}>Help on this function</Fit></HelpLink>
            <Button $primary>OK</Button>
            <Button $ml={9}>Cancel</Button>
          </FootRow>
        </Foot>
      </Dialog>

      <LogoMark />
      <Phone width="590" height="76" viewBox="0 0 590 76">
        <text
          x="13"
          y="61.500"
          textLength="570"
          lengthAdjust="spacingAndGlyphs"
          fontFamily='"Liberation Sans", Arial, sans-serif'
          fontSize="66"
          fill="#35048a"
          stroke="#35048a"
          strokeWidth="2.800"
          strokeLinejoin="round"
        >
          +9232220268966
        </text>
      </Phone>
    </Screen>
  );
}
